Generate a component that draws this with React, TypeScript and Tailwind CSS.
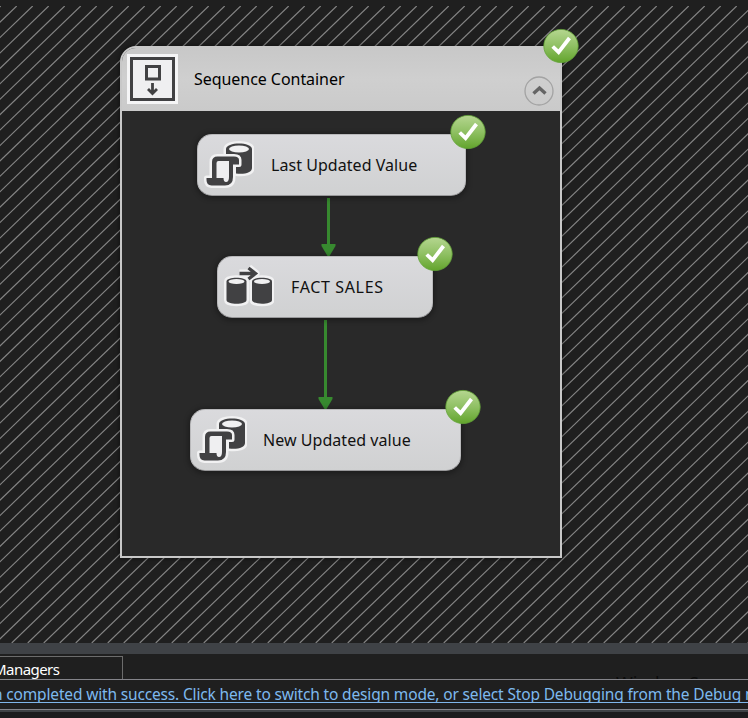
import React from "react";

const FONT = "font-['Noto_Sans','Open_Sans',sans-serif]";

function Hatch() {
  const h = 637;
  const step = 15.42;
  const lines: React.ReactElement[] = [];
  for (let k = 0; k < 95; k++) {
    const x = k * 16 + 0.7;
    lines.push(<line key={k} x1={x} y1={0} x2={x - (h / step) * 16} y2={h} />);
  }
  return (
    <svg className="absolute left-0 top-[6px]" width="748" height={h} stroke="#858585" strokeWidth="1.15">
      {lines}
    </svg>
  );
}

function Check({ className, id }: { className: string; id: string }) {
  return (
    <svg className={"absolute " + className} width="36" height="36" viewBox="0 0 36 36">
      <defs>
        <linearGradient id={id} x1="0" y1="0" x2="0" y2="1">
          <stop offset="0" stopColor="#b5d690" />
          <stop offset="0.5" stopColor="#8fc063" />
          <stop offset="1" stopColor="#62a42c" />
        </linearGradient>
      </defs>
      <ellipse cx="18" cy="18" rx="17.2" ry="16.6" fill={"url(#" + id + ")"} stroke="#62a337" strokeWidth="0.8" />
      <path d="M9.700 18.500 L15.600 24.200 L26.500 10" fill="none" stroke="#fff" strokeWidth="3.8" />
    </svg>
  );
}

function SqlIcon() {
  const scroll =
    "M8.500 39 H14 V23 Q14 17.500 19.500 17.500 H36 Q41 17.500 41 21 V25.500 H35 V38 Q35 46.500 27 46.500 H13.500 Q8.500 46 8.500 41 Z";
  const cyl = "M28 10 C28 2.500 54 2.500 54 10 V29 C54 33.500 47 35.500 38 34.500 V20 L28 17 Z";
  return (
    <svg width="56" height="52" viewBox="0 0 56 52" className="shrink-0">
      <path d={cyl} fill="#f1f1f2" stroke="#f1f1f2" strokeWidth="5" strokeLinejoin="round" />
      <path d={cyl} fill="#414143" />
      <ellipse cx="41" cy="10" rx="10" ry="3.500" fill="#f1f1f2" />
      <path d={scroll} fill="#414143" stroke="#f1f1f2" strokeWidth="5" paintOrder="stroke" strokeLinejoin="round" />
      <path d="M18.500 24 Q18.500 22 20.500 22 H31 V38 Q31 43 28 43 Q25.500 43 25.500 39 H18.500 Z" fill="#efeff1" />
    </svg>
  );
}

function DataFlowIcon() {
  const left = "M8.500 20.500 C8.500 15.500 28.500 15.500 28.500 20.500 V39 C28.500 44 8.500 44 8.500 39 Z";
  const right = "M34 20.500 C34 15.500 54 15.500 54 20.500 V39 C54 44 34 44 34 39 Z";
  const arrow = "M21.500 12.500 H37.500 M30.500 7 L37.500 12.500 L30.500 18";
  return (
    <svg width="56" height="52" viewBox="0 0 56 52" className="shrink-0">
      <g fill="#f1f1f2" stroke="#f1f1f2" strokeWidth="5" strokeLinejoin="round">
        <path d={left} />
        <path d={right} />
        <path d={arrow} fill="none" strokeWidth="8" />
      </g>
      <path d={left} fill="#414143" />
      <path d={right} fill="#414143" />
      <ellipse cx="18.500" cy="20.500" rx="8" ry="2.500" fill="#f1f1f2" />
      <ellipse cx="44" cy="20.500" rx="8" ry="2.500" fill="#f1f1f2" />
      <path d={arrow} fill="none" stroke="#414143" strokeWidth="3.300" />
    </svg>
  );
}

function Task({ className, label, labelClass, icon, id }: {
  className: string;
  label: string;
  labelClass: string;
  icon: React.ReactNode;
  id: string;
}) {
  return (
    <div
      className={
        "absolute flex h-[62px] items-center rounded-[15px] border border-[#b9b9bb] border-b-[#98989a] bg-linear-to-b from-[#dadadd] to-[#d0d1d2] shadow-[0_1px_5px_2px_rgba(0,0,0,0.28)] " +
        className
      }
    >
      {icon}
      <span className={"whitespace-nowrap text-[16px] leading-none text-[#111] " + labelClass}>{label}</span>
      <Check id={id} className="-right-[21px] -top-[21px]" />
    </div>
  );
}

function Arrow({ className, height }: { className: string; height: number }) {
  return (
    <svg className={"absolute " + className} width="16" height={height} fill="#37892f">
      <rect x="7" y="0" width="3" height={height - 10} />
      <path d={`M1.500 ${height - 12} H15.500 V${height - 10} L9.500 ${height} H7.500 L1.500 ${height - 10} Z`} />
    </svg>
  );
}

export default function App() {
  return (
    <div className={"flex h-[718px] w-[748px] flex-col overflow-hidden bg-[#1f1f1f] " + FONT}>
      <main className="relative h-[643px] shrink-0 overflow-hidden">
        <Hatch />
        <section className="absolute left-[120px] top-[46px] h-[512px] w-[442px] rounded-t-[16px] border-2 border-[#c8c8c8] bg-[#292929] shadow-[0_0_5px_1px_rgba(0,0,0,0.4)]">
          <header className="flex h-[63px] items-center rounded-t-[14px] bg-linear-to-b from-[#c8c8c8] via-[#cfcfcf] to-[#cacaca]">
            <svg className="-mt-[2px] ml-[5px] shrink-0" width="51" height="50" viewBox="0 0 51 50">
              <rect width="51" height="50" fill="#f5f5f6" />
              <rect x="4.500" y="4.500" width="42" height="41" fill="#efeff1" stroke="#414143" strokeWidth="3" />
              <rect x="19.500" y="12.500" width="13" height="12.500" fill="#efeff1" stroke="#414143" strokeWidth="3" />
              <path d="M25.500 29 V40 M21 35 L25.500 39.500 L30 35" fill="none" stroke="#414143" strokeWidth="2.800" />
            </svg>
            <span className="-mt-[2px] ml-[16px] whitespace-nowrap text-[16px] leading-none tracking-[-0.05px] text-black">Sequence Container</span>
            <svg className="ml-auto mr-[6px] mt-[23px] shrink-0" width="30" height="30" viewBox="0 0 30 30" fill="none">
              <circle cx="15" cy="15" r="14" stroke="#a3a3a3" strokeWidth="1.300" />
              <path d="M9.500 17.500 L15.500 12 L21.500 17.500" stroke="#656565" strokeWidth="3.400" />
            </svg>
          </header>
        </section>
        <Check id="ok-seq" className="left-[543px] top-[28px]" />
        <Arrow className="left-[320px] top-[198px]" height={58} />
        <Arrow className="left-[317px] top-[320px]" height={89} />
        <Task id="ok-last" className="left-[197px] top-[134px] w-[269px]" label="Last Updated Value" labelClass="ml-[17px] tracking-[0.05px]" icon={<SqlIcon />} />
        <Task id="ok-fact" className="left-[217px] top-[256px] w-[216px]" label="FACT SALES" labelClass="ml-[17px] tracking-[0.65px]" icon={<DataFlowIcon />} />
        <Task id="ok-new" className="left-[190px] top-[409px] w-[271px]" label="New Updated value" labelClass="ml-[16px] tracking-[0.05px]" icon={<SqlIcon />} />
      </main>
      <div className="h-[11px] shrink-0 bg-[#3f4246]" />
      <div className="flex h-[25px] shrink-0 items-end justify-between overflow-hidden">
        <div className="flex h-[23px] w-[123px] items-center border-r border-t border-[#6c6c6c]">
          <span className="-ml-[7px] mt-[2px] whitespace-nowrap text-[15px] leading-none tracking-[-0.55px] text-white">Managers</span>
        </div>
        <div className="mr-[46px] h-[6px] w-[86px] overflow-hidden whitespace-nowrap text-[18px] leading-[20px] text-[#0b0b0b]">Window S</div>
      </div>
      <div className="flex h-[31px] shrink-0 items-start overflow-hidden border-y border-[#84848a]">
        <div className="h-[23px] w-full overflow-hidden border-b border-[#7fb6ea]">
          <span className="-ml-[7px] whitespace-nowrap text-[15.500px] leading-[28px] tracking-[-0.16px] text-[#7db9ee]">
            n completed with success. Click here to switch to design mode, or select Stop Debugging from the Debug menu
          </span>
        </div>
      </div>
      <div className="h-[2px] shrink-0 bg-[#3f4246]" />
      <div className="grow bg-[#1c1c1e]" />
    </div>
  );
}
